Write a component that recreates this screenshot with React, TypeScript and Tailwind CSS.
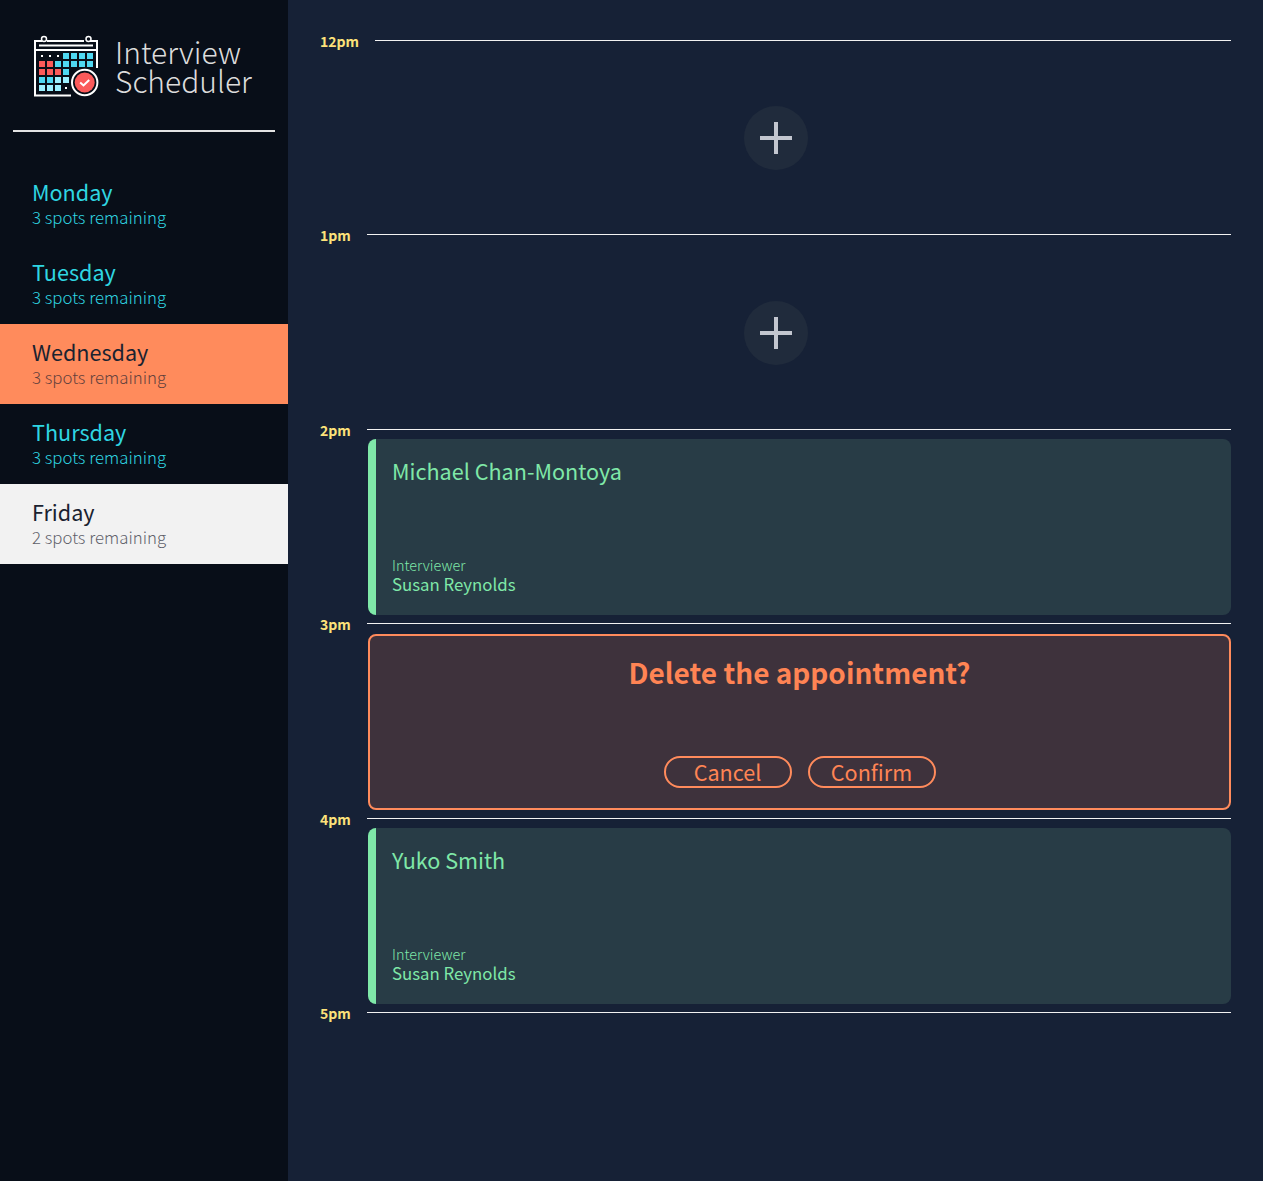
import React from 'react';

const days = [
  { name: 'Monday', spots: 3 },
  { name: 'Tuesday', spots: 3 },
  { name: 'Wednesday', spots: 3, state: 'selected' },
  { name: 'Thursday', spots: 3 },
  { name: 'Friday', spots: 2, state: 'hover' },
];

const calendarCells = [
  { col: 3, row: 0, fill: '#4fd8f2' }, { col: 4, row: 0, fill: '#4fd8f2' }, { col: 5, row: 0, fill: '#4fd8f2' }, { col: 6, row: 0, fill: '#4fd8f2' },
  { col: 0, row: 1, fill: '#fb5a5a' }, { col: 1, row: 1, fill: '#fb5a5a' }, { col: 2, row: 1, fill: '#4fd8f2' }, { col: 3, row: 1, fill: '#4fd8f2' }, { col: 4, row: 1, fill: '#4fd8f2' }, { col: 5, row: 1, fill: '#4fd8f2' }, { col: 6, row: 1, fill: '#4fd8f2' },
  { col: 0, row: 2, fill: '#fb5a5a' }, { col: 1, row: 2, fill: '#fb5a5a' }, { col: 2, row: 2, fill: '#fb5a5a' }, { col: 3, row: 2, fill: '#4fd8f2' },
  { col: 0, row: 3, fill: '#4fd8f2' }, { col: 1, row: 3, fill: '#4fd8f2' }, { col: 2, row: 3, fill: '#9df0ff' }, { col: 3, row: 3, fill: '#9df0ff' },
  { col: 0, row: 4, fill: '#9df0ff' }, { col: 1, row: 4, fill: '#9df0ff' }, { col: 2, row: 4, fill: '#9df0ff' },
];

const Logo = () => (
  <svg width="65" height="62" viewBox="34 35 65 62" fill="none" className="shrink-0">
    {/* frame */}
    <path d="M71 95.5H35V41H42M47 41H84M90 41H97V68" stroke="#fff" strokeWidth="2" />
    <path d="M35 50H97" stroke="#fff" strokeWidth="2" />
    <path d="M39 45.5H93" stroke="#fff" strokeWidth="2" />
    <circle cx="44" cy="39" r="2.5" stroke="#fff" strokeWidth="1.5" />
    <circle cx="88.5" cy="39" r="2.5" stroke="#fff" strokeWidth="1.5" />
    {/* dots */}
    <rect x="41" y="55" width="2" height="2" fill="#fff" />
    <rect x="49" y="55" width="2" height="2" fill="#fff" />
    <rect x="57" y="55" width="2" height="2" fill="#fff" />
    <rect x="65" y="87" width="2" height="2" fill="#fff" />
    {calendarCells.map((c) => (
      <rect key={`${c.col}-${c.row}`} x={39 + c.col * 8} y={53 + c.row * 8} width="6" height="6" fill={c.fill} />
    ))}
    {/* check badge */}
    <circle cx="84.7" cy="82.5" r="12.7" fill="#070d16" stroke="#fff" strokeWidth="2" />
    <circle cx="84.7" cy="82.5" r="10" fill="#fb5a5a" />
    <path d="M80.2 82.5L83.5 85.5L89.2 80" stroke="#fff" strokeWidth="2" />
  </svg>
);

const DayItem = ({ name, spots, state }: { name: string; spots: number; state?: string }) => {
  const wrap =
    state === 'selected'
      ? 'bg-[#ff8b5c] text-[#1a2230]'
      : state === 'hover'
      ? 'bg-[#f2f2f2] text-[#1a2230]'
      : 'text-[#2fd6e2]';
  return (
    <li className={`h-20 pl-8 pt-[14px] ${wrap}`}>
      <h2 className="text-[21.6px] leading-[27px] font-normal">{name}</h2>
      <p className={`mt-[2px] text-[16.8px] leading-[21px] font-light ${state ? 'opacity-70' : ''}`}>{spots} spots remaining</p>
    </li>
  );
};

const Slot = ({ time, children }: { time: string; children?: React.ReactNode }) => (
  <article className="h-[194.4px]">
    <header className="flex h-px items-start">
      <h4 className="-mt-[7px] text-sm leading-4 font-bold text-[#fde27a]">{time}</h4>
      <div className="ml-4 h-px flex-1 bg-[#f2f2f2]" />
    </header>
    {children}
  </article>
);

const AddButton = () => (
  <div className="flex justify-center pt-[65.2px]">
    <div className="flex h-16 w-16 items-center justify-center rounded-full bg-[#202b3c]">
      <svg width="32" height="32" viewBox="0 0 32 32">
        <path d="M14 0h4v14h14v4H18v14h-4V18H0v-4h14z" fill="#c2c6cf" />
      </svg>
    </div>
  </div>
);

const Show = ({ student, interviewer }: { student: string; interviewer: string }) => (
  <div className="mt-[9px] ml-12 flex h-44 flex-col justify-between rounded-lg border-l-8 border-[#7fe8a8] bg-[#283c46] pt-[18px] pb-[20px] pl-4 text-[#7fe8a8]">
    <h2 className="text-[21.6px] leading-[28px]">{student}</h2>
    <div>
      <h4 className="text-[14.4px] leading-[18px] font-light">Interviewer</h4>
      <h3 className="-mt-px text-[16.8px] leading-[22px]">{interviewer}</h3>
    </div>
  </div>
);

const ConfirmCard = () => (
  <div className="mt-[10px] ml-12 flex h-44 flex-col items-center justify-between rounded-lg border-2 border-[#ff8b5c] bg-[#3e323c] pt-[18px] pb-5 text-[#ff8454]">
    <h1 className="text-[28px] leading-9 font-semibold">Delete the appointment?</h1>
    <div className="flex gap-4">
      <button className="h-8 w-32 rounded-2xl border-2 border-[#ff8b5c] text-[21.6px] leading-7">Cancel</button>
      <button className="h-8 w-32 rounded-2xl border-2 border-[#ff8b5c] text-[21.6px] leading-7">Confirm</button>
    </div>
  </div>
);

export default function App() {
  return (
    <main
      className="flex min-h-screen bg-[#162136]"
      style={{ fontFamily: '"Noto Sans CJK SC", "Noto Sans", sans-serif' }}
    >
      <nav className="w-72 shrink-0 bg-[#080e18]">
        <div className="mx-[13px] flex h-[132px] items-start gap-4 border-b-2 border-[#e3e3e3] pt-[35px] pl-[21px]">
          <Logo />
          <h1 className="pt-[2px] text-[30px] leading-[29px] font-light text-[#dcdcdc]">
            Interview
            <br />
            Scheduler
          </h1>
        </div>
        <ul className="mt-[32px]">
          {days.map((d) => (
            <DayItem key={d.name} {...d} />
          ))}
        </ul>
      </nav>
      <section className="flex-1 pt-10 pr-8 pl-8">
        <Slot time="12pm"><AddButton /></Slot>
        <Slot time="1pm"><AddButton /></Slot>
        <Slot time="2pm"><Show student="Michael Chan-Montoya" interviewer="Susan Reynolds" /></Slot>
        <Slot time="3pm"><ConfirmCard /></Slot>
        <Slot time="4pm"><Show student="Yuko Smith" interviewer="Susan Reynolds" /></Slot>
        <Slot time="5pm" />
      </section>
    </main>
  );
}
